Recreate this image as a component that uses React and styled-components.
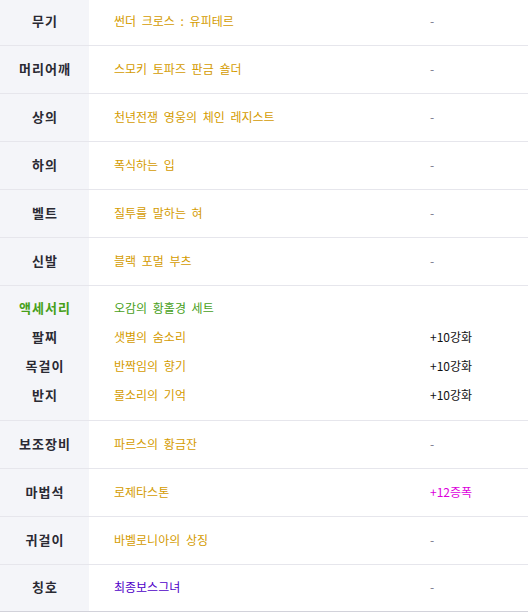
import styled, { createGlobalStyle } from 'styled-components';

const GlobalStyle = createGlobalStyle`
  body {
    margin: 0;
    background: #fff;
    font-family: "Noto Sans CJK KR", "Noto Sans", sans-serif;
  }
`;

const colors = {
  gold: '#d49b00',
  green: '#47a01a',
  purple: '#5000c8',
  magenta: '#dc00dc',
  black: '#111',
  dash: '#76768a',
};

const gear = [
  { slot: '무기', name: '썬더 크로스 : 유피테르' },
  { slot: '머리어깨', name: '스모키 토파즈 판금 숄더' },
  { slot: '상의', name: '천년전쟁 영웅의 체인 레지스트' },
  { slot: '하의', name: '폭식하는 입' },
  { slot: '벨트', name: '질투를 말하는 혀' },
  { slot: '신발', name: '블랙 포멀 부츠' },
  {
    group: true,
    lines: [
      { slot: '액세서리', name: '오감의 황홀경 세트', tone: 'green', slotTone: 'green' },
      { slot: '팔찌', name: '샛별의 숨소리', value: '+10강화' },
      { slot: '목걸이', name: '반짝임의 향기', value: '+10강화' },
      { slot: '반지', name: '물소리의 기억', value: '+10강화' },
    ],
  },
  { slot: '보조장비', name: '파르스의 황금잔' },
  { slot: '마법석', name: '로제타스톤', value: '+12증폭', valueTone: 'magenta' },
  { slot: '귀걸이', name: '바벨로니아의 상징' },
  { slot: '칭호', name: '최종보스그녀', tone: 'purple', last: true },
];

const Table = styled.div`
  margin-top: -2px;
  width: 528px;
`;

const Row = styled.div`
  display: grid;
  grid-template-columns: 89px 1fr 98px;
  min-height: ${p => (p.$last ? 46 : 47)}px;
  border-bottom: 1px solid ${p => (p.$last ? '#d2d2da' : '#e6e6ec')};
`;

const SlotCell = styled.div`
  background: #f4f5f9;
  display: flex;
  flex-direction: column;
  justify-content: center;
  align-items: center;
  padding: ${p => (p.$group ? '7px 0 11px' : '0 0 3px')};
`;

const Cell = styled.div`
  display: flex;
  flex-direction: column;
  justify-content: center;
  padding: ${p => (p.$group ? '7px 0 11px' : '0 0 3px')};
  padding-left: ${p => p.$indent || 0}px;
`;

const Line = styled.div`
  height: ${p => (p.$group ? 29 : 20)}px;
  display: flex;
  align-items: center;
  white-space: nowrap;
`;

const Slot = styled(Line)`
  font-size: 13px;
  font-weight: 700;
  letter-spacing: 1px;
  padding-left: 1px;
  color: ${p => (p.$tone ? colors[p.$tone] : '#2a2a33')};
`;

const Name = styled(Line)`
  font-size: 12px;
  word-spacing: 3px;
  color: ${p => colors[p.$tone || 'gold']};
`;

const Value = styled(Line)`
  font-size: 12px;
  color: ${p => colors[p.$tone || 'black']};
`;

const Dash = styled(Line)`
  font-size: 12px;
  color: ${colors.dash};
`;

const renderValue = (line, group, key) =>
  line.value ? (
    <Value key={key} $group={group} $tone={line.valueTone}>
      {line.value}
    </Value>
  ) : group ? (
    <Line key={key} $group />
  ) : (
    <Dash key={key}>-</Dash>
  );

const GearRow = ({ item }) => {
  const lines = item.group ? item.lines : [item];
  const group = !!item.group;
  return (
    <Row $last={item.last}>
      <SlotCell $group={group}>
        {lines.map(l => (
          <Slot key={l.slot} $group={group} $tone={l.slotTone}>
            {l.slot}
          </Slot>
        ))}
      </SlotCell>
      <Cell $group={group} $indent={25}>
        {lines.map(l => (
          <Name key={l.name} $group={group} $tone={l.tone}>
            {l.name}
          </Name>
        ))}
      </Cell>
      <Cell $group={group}>{lines.map((l, i) => renderValue(l, group, i))}</Cell>
    </Row>
  );
};

const App = () => (
  <>
    <GlobalStyle />
    <Table>
      {gear.map((item, i) => (
        <GearRow key={i} item={item} />
      ))}
    </Table>
  </>
);

export default App;
